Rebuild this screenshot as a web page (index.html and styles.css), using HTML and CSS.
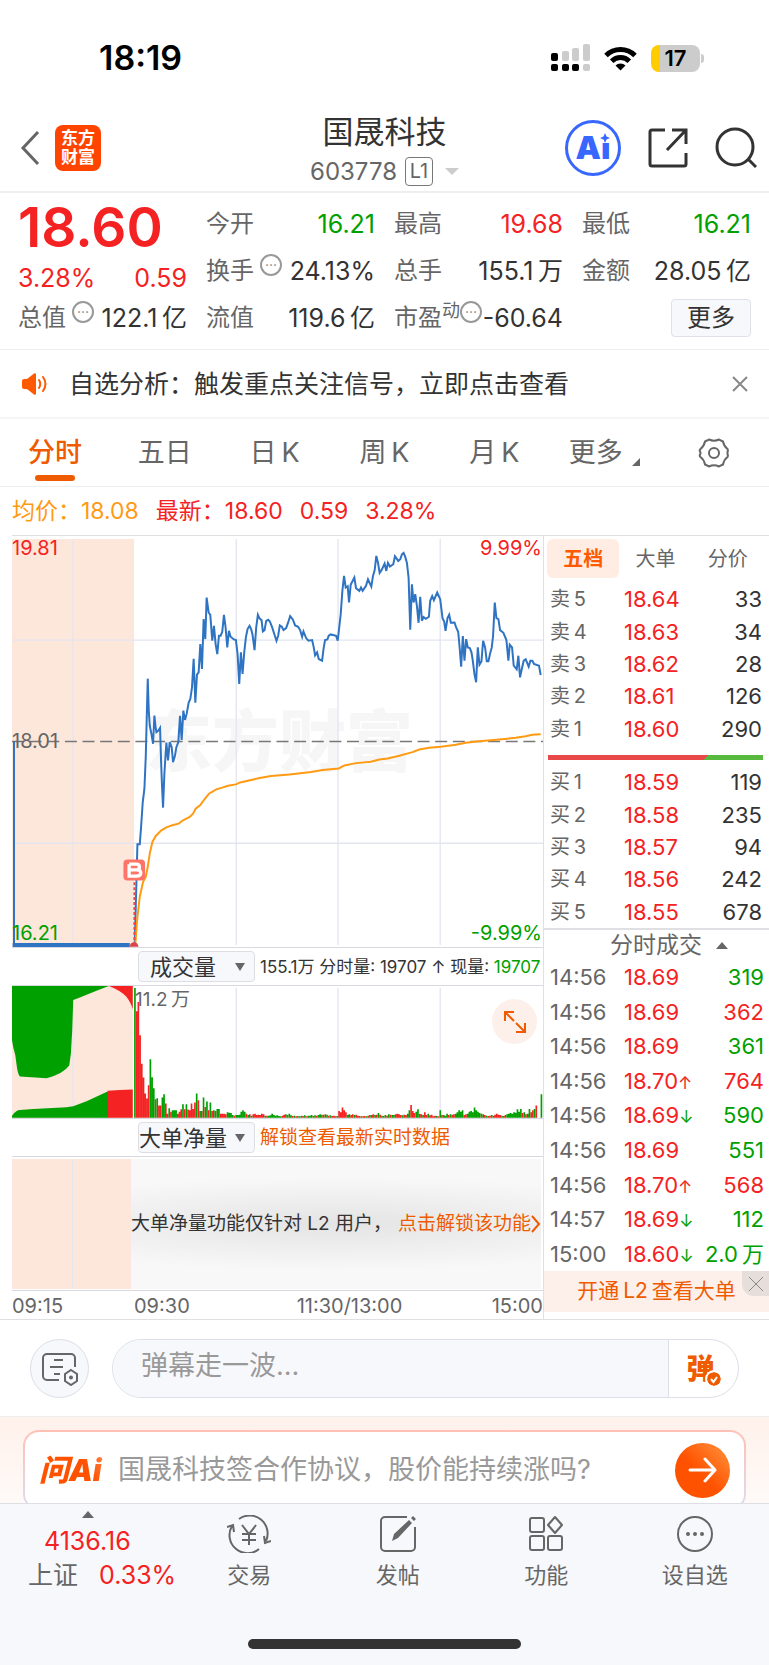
FILE: index.html
```html
<!DOCTYPE html>
<html lang="zh-CN">

<head>
  <meta charset="UTF-8"/>
  <meta name="viewport" content="width=device-width, initial-scale=1"/>
  <title>国晟科技 603778</title>

  <link rel="stylesheet" href="styles.css">
</head>

<body>
<div class="status">
  <span class="clock">18:19</span>
  <div class="status-icons">
    <svg width="39" height="28" viewBox="0 0 39 28">
      <g fill="#ccc">
        <rect x="11" y="7" width="7" height="10" rx="2"/>
        <rect x="21" y="4" width="7" height="13" rx="2"/>
        <rect x="32" y="0" width="7" height="17" rx="2"/>
        <rect x="32" y="20" width="7" height="7" rx="2"/>
      </g>
      <rect x="0" y="9" width="7" height="8" rx="2"/>
      <rect x="0" y="20" width="7" height="7" rx="2"/>
      <rect x="11" y="20" width="7" height="7" rx="2"/>
      <rect x="21" y="20" width="7" height="7" rx="2"/>
    </svg>
    <svg width="33" height="25" viewBox="0 0 33 25">
      <g fill="none" stroke="#000" stroke-width="5">
        <path d="M2 9.5a20.5 20.5 0 0 1 29 0"/>
        <path d="M7.7 15.2a12.5 12.5 0 0 1 17.600 0"/>
      </g>
      <path d="M16.500 24.500l-5-5a7.500 7.500 0 0 1 10 0z"/>
    </svg>
    <div class="battery"><span>17</span></div>
  </div>
</div>

<header class="header">
  <div class="header-left">
    <a href="#" class="back" aria-label="返回">
      <svg width="20" height="36" viewBox="0 0 20 36" fill="none" stroke="#666" stroke-width="3"><path d="M18 2L3 18l15 16"/></svg>
    </a>
    <div class="brand">东方<br>财富</div>
  </div>
  <div class="header-title">
    <h1>国晟科技</h1>
    <p>603778 <span class="level">L1</span><i class="caret"></i></p>
  </div>
  <div class="header-right">
    <a href="#" class="ai">Ai
      <svg width="10" height="10" viewBox="0 0 10 10"><path fill="#3867ff" d="M5 0l1.500 3.500L10 5 6.500 6.500 5 10 3.500 6.500 0 5l3.500-1.500z"/></svg>
    </a>
    <button type="button" aria-label="分享">
      <svg width="40" height="40" viewBox="0 0 40 40" fill="none" stroke="#333" stroke-width="3">
        <path d="M17 2H4a2 2 0 0 0-2 2v32a2 2 0 0 0 2 2h32a2 2 0 0 0 2-2V25"/>
        <path d="M24 2h14v14M38 2L19 22"/>
      </svg>
    </button>
    <button type="button" aria-label="搜索">
      <svg width="42" height="42" viewBox="0 0 42 42" fill="none" stroke="#333" stroke-width="3">
        <circle cx="20" cy="20" r="18"/><path d="M33 32l8 8"/>
      </svg>
    </button>
  </div>
</header>

<section class="quote">
  <div class="quote-main">
    <div class="price">18.60</div>
    <div class="change"><span>3.28%</span><span>0.59</span></div>
    <div class="cell"><span class="name">总值</span><i class="tip">···</i><span class="value">122.1&thinsp;亿</span></div>
  </div>
  <div class="quote-grid">
    <div class="cell"><span class="name">今开</span><span class="value down">16.21</span></div>
    <div class="cell"><span class="name">最高</span><span class="value up">19.68</span></div>
    <div class="cell"><span class="name">最低</span><span class="value down">16.21</span></div>
    <div class="cell"><span class="name">换手</span><i class="tip">···</i><span class="value">24.13%</span></div>
    <div class="cell"><span class="name">总手</span><span class="value">155.1&thinsp;万</span></div>
    <div class="cell"><span class="name">金额</span><span class="value">28.05&thinsp;亿</span></div>
    <div class="cell"><span class="name">流值</span><span class="value">119.6&thinsp;亿</span></div>
    <div class="cell"><span class="name">市盈<sup>动</sup></span><i class="tip flush">···</i><span class="value">-60.64</span></div>
    <div class="cell"><button type="button" class="more">更多</button></div>
  </div>
</section>

<section class="notice">
  <svg width="26" height="22" viewBox="0 0 26 22">
    <path fill="#ff5a00" d="M1 8q0-2 2-2h3l7-5.500q2-1 2 1v19q0 2-2 1L6 16H3q-2 0-2-2z"/>
    <path fill="none" stroke="#ff5a00" stroke-width="2" stroke-linecap="round" d="M18 7q2.500 4 0 8M22 4q5 7 0 14"/>
  </svg>
  <a href="#">自选分析：触发重点关注信号，立即点击查看</a>
  <button type="button" aria-label="关闭">
    <svg width="16" height="16" viewBox="0 0 16 16" stroke="#888" stroke-width="2"><path d="M1 1l14 14M15 1L1 15"/></svg>
  </button>
</section>

<nav class="periods">
  <button type="button" class="active">分时</button>
  <button type="button">五日</button>
  <button type="button">日&thinsp;K</button>
  <button type="button">周&thinsp;K</button>
  <button type="button">月&thinsp;K</button>
  <button type="button">更多<i class="corner"></i></button>
  <button type="button" aria-label="设置">
    <svg width="32" height="30" viewBox="0 0 32 30" fill="none" stroke="#666" stroke-width="2">
      <path d="M11 1.500q5 2.500 10 0l4 2q1 5 4.500 7.500.800 1.500 0 3v2q.800 1.500 0 3Q26 21.500 25 26.500l-4 2q-5-2.500-10 0l-4-2Q6 21.500 2.500 19q-1.500-1.500 0-3.500v-1q-1.500-2 0-3.500Q6 8.500 7 3.500z"/>
      <circle cx="16" cy="15" r="5"/>
    </svg>
  </button>
</nav>

<p class="legend"><span class="avg">均价：18.08</span><span>最新：18.60</span><span>0.59</span><span>3.28%</span></p>

<main class="board">
  <div class="charts">
    <div class="plot price-plot">
      <div class="watermark">东方财富</div>
      <svg viewBox="36 15 1596 1236" preserveAspectRatio="none">
        <rect x="36" y="24" width="367" height="1224" fill="#fde6da"/>
        <g stroke="#e4e6ef" stroke-width="4">
          <path d="M219 24V1245M710 24V1245M1016 24V1245M1323 24V1245M36 328H1632M36 939H1632"/>
        </g>
        <path d="M36 633H1632" stroke="#777" stroke-width="4" stroke-dasharray="36 17"/>
        <path d="M42 633V1240" stroke="#2f73c3" stroke-width="6"/>
        <path d="M38 1245H390" stroke="#2f73c3" stroke-width="12"/>
        <polyline fill="none" stroke="#2f73c3" stroke-width="6" points="405,1240 413,942 420,942 424,890 429,815 434,775 438,680 441,560 444,444 447,540 450,585 455,610 460,640 464,555 467,585 470,605 476,600 481,592 484,690 487,770 490,832 494,730 500,636 505,690 510,635 516,650 520,695 526,675 530,650 536,635 541,556 546,628 551,540 556,568 561,550 567,516 572,505 577,470 582,384 587,516 592,432 597,425 602,340 607,415 612,265 617,325 621,200 627,245 632,252 638,330 643,285 648,340 653,370 658,315 663,315 668,303 673,252 678,290 683,350 688,300 693,318 703,326 709,328 714,370 719,460 724,365 729,430 734,365 739,320 744,295 750,285 755,296 759,312 765,358 770,290 775,252 780,263 786,268 790,302 795,298 800,270 806,267 811,272 818,290 826,315 831,330 836,315 841,284 847,288 852,298 860,292 866,275 872,256 880,266 887,284 896,288 902,298 908,318 912,302 920,322 927,330 938,328 943,350 947,374 953,365 958,385 968,390 973,350 977,328 984,326 988,315 994,311 1010,315 1015,330 1020,285 1024,250 1029,180 1034,135 1039,170 1045,166 1049,215 1054,162 1065,140 1070,172 1080,180 1085,170 1090,180 1100,165 1106,145 1116,167 1121,135 1126,118 1131,75 1136,95 1141,126 1147,117 1156,98 1161,120 1166,96 1172,107 1182,100 1187,76 1197,90 1203,85 1208,70 1213,66 1218,78 1223,96 1228,140 1233,297 1238,160 1243,215 1248,190 1253,225 1258,276 1263,198 1268,270 1273,259 1280,264 1289,258 1293,210 1299,196 1304,208 1314,185 1323,205 1330,262 1335,272 1339,300 1345,262 1350,252 1355,276 1366,275 1371,290 1377,303 1381,345 1386,408 1391,316 1396,390 1401,325 1406,350 1412,352 1417,365 1421,390 1426,430 1431,455 1436,350 1441,402 1447,392 1452,330 1458,350 1463,392 1468,392 1473,368 1478,350 1482,315 1487,215 1492,262 1498,265 1503,298 1513,306 1522,328 1528,390 1532,342 1539,350 1544,405 1553,416 1558,375 1563,440 1569,412 1574,390 1580,386 1589,408 1594,390 1600,390 1605,400 1620,405 1625,433"/>
        <polyline fill="none" stroke="#ff9a13" stroke-width="6" points="407,1238 412,1170 420,1100 430,1055 438,1040 444,1010 450,970 458,935 468,917 485,900 500,891 520,884 537,880 550,870 570,860 580,850 588,835 602,824 615,806 628,790 650,777 670,771 685,766 709,762 722,756 745,751 780,743 815,737 870,732 935,725 970,719 1018,714 1035,705 1070,698 1115,694 1140,687 1165,684 1200,676 1240,665 1260,657 1290,652 1325,649 1370,643 1400,637 1440,632 1500,627 1550,622 1580,617 1600,613 1625,611"/>
        <path d="M404 1056V1236" stroke="#e5484d" stroke-width="6" stroke-dasharray="9 6"/>
        <path d="M390 1250a13 13 0 0 1 26 0z" fill="#d9444a"/>
        <rect x="371" y="988" width="65" height="63" rx="12" fill="#ff7468"/>
        <path fill="none" stroke="#fff" stroke-width="10" d="M388 1002H410Q419 1002 419 1011Q419 1019 410 1019H388M410 1019Q423 1019 423 1028Q423 1038 410 1038H388V1002"/>
      </svg>
      <span class="label top left up">19.81</span>
      <span class="label middle left">18.01</span>
      <span class="label bottom left down">16.21</span>
      <span class="label top right up">9.99%</span>
      <span class="label bottom right down">-9.99%</span>
    </div>

    <div class="indicator">
      <div class="picker">
        <select aria-label="指标一"><option>成交量</option><option>成交额</option></select>
        <i class="arrow"></i>
      </div>
      <span class="summary">155.1万 分时量: 19707 ↑ 现量: <b class="down">19707</b></span>
    </div>

    <div class="plot volume-plot">
      <svg viewBox="36 138 1596 394" preserveAspectRatio="none">
        <rect x="36" y="138" width="363" height="394" fill="#fde6da"/>
        <path d="M219 138V531" stroke="#e4e6ef" stroke-width="4"/>
        <path fill="#00a000" d="M36 138H327L290 152 240 172 220 180 217 270 213 340 208 375Q190 400 140 413L60 408Q54 404 50 375L46 345 40 322 36 300z"/>
        <path fill="#00a000" d="M36 531V525Q48 508 60 508L100 505 200 500 220 497 260 482 325 452V531z"/>
        <path fill="#f42222" d="M327 138H399V208Q395 190 380 170 360 150 327 138zM324 451Q360 448 399 447V531H324z"/>
        <path d="M710 144V531M1016 144V531M1323 144V531" stroke="#e4e6ef" stroke-width="4"/>
        <path id="bars-up" fill="#f42222"/>
        <path id="bars-down" fill="#00a000"/>
      </svg>
      <span class="label volume-max">11.2&thinsp;万</span>
      <button type="button" class="expand" aria-label="全屏">
        <svg width="24" height="24" viewBox="0 0 24 24" fill="none" stroke="#ee5b00" stroke-width="2">
          <path d="M2 11V2h9M2 2l9 9M22 13v9h-9M22 22l-9-9"/>
        </svg>
      </button>
    </div>

    <div class="indicator">
      <div class="picker">
        <select aria-label="指标二"><option>大单净量</option><option>资金流向</option></select>
        <i class="arrow"></i>
      </div>
      <a href="#" class="unlock">解锁查看最新实时数据</a>
    </div>

    <div class="locked">
      <div class="auction"></div>
      <p><span>大单净量功能仅针对&nbsp;L2&nbsp;用户，</span><a href="#">点击解锁该功能<svg width="10" height="18" viewBox="0 0 10 18" fill="none" stroke="#ee5b00" stroke-width="2"><path d="M1 1l7 8-7 8"/></svg></a></p>
    </div>

    <div class="axis"><span>09:15</span><span>09:30</span><span>11:30/13:00</span><span>15:00</span></div>
  </div>

  <aside class="side">
    <div class="side-tabs">
      <button type="button" class="active">五档</button>
      <button type="button">大单</button>
      <button type="button">分价</button>
    </div>
    <table class="orders">
      <tr><th>卖&thinsp;5</th><td class="up">18.64</td><td>33</td></tr>
      <tr><th>卖&thinsp;4</th><td class="up">18.63</td><td>34</td></tr>
      <tr><th>卖&thinsp;3</th><td class="up">18.62</td><td>28</td></tr>
      <tr><th>卖&thinsp;2</th><td class="up">18.61</td><td>126</td></tr>
      <tr><th>卖&thinsp;1</th><td class="up">18.60</td><td>290</td></tr>
    </table>
    <div class="ratio"></div>
    <table class="orders">
      <tr><th>买&thinsp;1</th><td class="up">18.59</td><td>119</td></tr>
      <tr><th>买&thinsp;2</th><td class="up">18.58</td><td>235</td></tr>
      <tr><th>买&thinsp;3</th><td class="up">18.57</td><td>94</td></tr>
      <tr><th>买&thinsp;4</th><td class="up">18.56</td><td>242</td></tr>
      <tr><th>买&thinsp;5</th><td class="up">18.55</td><td>678</td></tr>
    </table>
    <h2>分时成交<i class="triangle"></i></h2>
    <table class="orders ticks">
      <tr><th>14:56</th><td class="up">18.69</td><td class="down">319</td></tr>
      <tr><th>14:56</th><td class="up">18.69</td><td class="up">362</td></tr>
      <tr><th>14:56</th><td class="up">18.69</td><td class="down">361</td></tr>
      <tr><th>14:56</th><td class="up">18.70<i class="up">↑</i></td><td class="up">764</td></tr>
      <tr><th>14:56</th><td class="up">18.69<i class="down">↓</i></td><td class="down">590</td></tr>
      <tr><th>14:56</th><td class="up">18.69</td><td class="down">551</td></tr>
      <tr><th>14:56</th><td class="up">18.70<i class="up">↑</i></td><td class="up">568</td></tr>
      <tr><th>14:57</th><td class="up">18.69<i class="down">↓</i></td><td class="down">112</td></tr>
      <tr><th>15:00</th><td class="up">18.60<i class="down">↓</i></td><td class="down">2.0&thinsp;万</td></tr>
    </table>
    <div class="promo">
      <a href="#">开通&thinsp;L2&thinsp;查看大单</a>
      <button type="button" aria-label="关闭">
        <svg width="14" height="14" viewBox="0 0 14 14" stroke="#888" stroke-width="1"><path d="M0 0l14 14M14 0L0 14"/></svg>
      </button>
    </div>
  </aside>
</main>

<form class="danmu">
  <button type="button" class="danmu-settings" aria-label="弹幕设置">
    <svg width="38" height="34" viewBox="0 0 38 34" fill="none" stroke="#666" stroke-width="2">
      <path d="M18 28H6a4 4 0 0 1-4-4V6a4 4 0 0 1 4-4h24a4 4 0 0 1 4 4v9"/>
      <path d="M13 8h9M9 15h13M13 22h6"/>
      <path d="M30 18l6 4v7l-6 4-6-4v-7z"/><circle cx="30" cy="25.500" r="1"/>
    </svg>
  </button>
  <div class="danmu-box">
    <input type="text" aria-label="弹幕" placeholder="弹幕走一波...">
    <button type="button" class="danmu-toggle">弹
      <svg width="14" height="14" viewBox="0 0 14 14"><circle cx="7" cy="7" r="7" fill="#ee5b00"/><path d="M4 7l2.500 3L10 5" fill="none" stroke="#fff" stroke-width="2"/></svg>
    </button>
  </div>
</form>

<section class="ask">
  <div class="ask-card">
    <span class="ask-logo">问Ai</span>
    <a href="#">国晟科技签合作协议，股价能持续涨吗?</a>
    <button type="button" aria-label="提问">
      <svg width="30" height="26" viewBox="0 0 30 26" fill="none" stroke="#fff" stroke-width="3" stroke-linecap="round" stroke-linejoin="round"><path d="M2 13h25M17 2l10 11-10 11"/></svg>
    </button>
  </div>
</section>

<footer class="tabbar">
  <div class="tabs">
    <a href="#" class="index">
      <i class="triangle"></i>
      <span class="up">4136.16</span>
      <span class="index-row">上证 <b class="up">0.33%</b></span>
    </a>
    <a href="#">
      <svg width="44" height="38" viewBox="0 0 44 38" fill="none" stroke="#666" stroke-width="2">
        <path d="M12 4a18 18 0 0 1 27 22M32 34A18 18 0 0 1 5 11M0 12l6-2 1 7M44 26l-6 2-1-7"/>
        <path d="M15 10l7 9 7-9M22 19v11M15 19h14M15 25h14"/>
      </svg>
      交易
    </a>
    <a href="#">
      <svg width="38" height="38" viewBox="0 0 38 38" fill="none" stroke="#666" stroke-width="2">
        <path d="M28 2H6a4 4 0 0 0-4 4v26a4 4 0 0 0 4 4h26a4 4 0 0 0 4-4V12"/>
        <path fill="#666" stroke="none" d="M13 26l2-7L30 5l3 3-14 15zM32 3l2-2 3 3-2 2z"/>
      </svg>
      发帖
    </a>
    <a href="#">
      <svg width="36" height="36" viewBox="0 0 36 36" fill="none" stroke="#666" stroke-width="2">
        <rect x="2" y="2" width="14" height="14" rx="2"/><rect x="2" y="20" width="14" height="14" rx="2"/><rect x="20" y="20" width="14" height="14" rx="2"/>
        <path d="M27 1l7 8-7 8-7-8z" stroke-linejoin="round"/>
      </svg>
      功能
    </a>
    <a href="#">
      <svg width="38" height="38" viewBox="0 0 38 38" fill="none" stroke="#666" stroke-width="2">
        <circle cx="19" cy="19" r="17"/>
        <g fill="#666" stroke="none"><circle cx="12" cy="19" r="2"/><circle cx="19" cy="19" r="2"/><circle cx="26" cy="19" r="2"/></g>
      </svg>
      设自选
    </a>
  </div>
  <div class="home"></div>
</footer>

<script src="script.js"></script>
</body>

</html>
```

FILE: styles.css
```css
* {
    box-sizing: border-box;
}

body {
    margin: 0;
    font-family: Inter, "Noto Sans CJK SC", sans-serif;
    font-size: 24px;
    line-height: 32px;
    color: #333;
    background-color: #fff;
}

h1,
h2,
p {
    margin: 0;
    font-weight: normal;
}

a {
    color: inherit;
    text-decoration: none;
}

i,
b {
    font-style: normal;
    font-weight: normal;
}

button {
    display: flex;
    align-items: center;
    justify-content: center;
    padding: 0;
    border: 0;
    background: none;
    font: inherit;
    color: inherit;
}

svg {
    display: block;
    flex: none;
}

.up {
    color: #f42222;
}

.down {
    color: #00a000;
}

.triangle {
    width: 0;
    height: 0;
    border: 6px solid transparent;
    border-top: 0;
    border-bottom: 7px solid #666;
}

/* status bar */
.status {
    display: flex;
    align-items: center;
    justify-content: space-between;
    height: 110px;
    padding: 6px 69px 0 99px;
}

.clock {
    font-size: 34px;
    font-weight: 600;
    color: #000;
}

.status-icons {
    display: flex;
    align-items: center;
    gap: 14px;
}

.battery {
    position: relative;
    width: 49px;
    height: 27px;
    border-radius: 8px;
    background: linear-gradient(90deg, #ffcc00 9px, #ccc 9px);
    font-size: 22px;
    font-weight: 600;
    line-height: 27px;
    text-align: center;
    color: #000;
}

.battery::after {
    content: "";
    position: absolute;
    top: 9px;
    right: -4px;
    width: 3px;
    height: 9px;
    border-radius: 0 3px 3px 0;
    background-color: #ccc;
}

/* header */
.header {
    display: grid;
    grid-template-columns: 1fr auto 1fr;
    align-items: center;
    height: 83px;
    padding: 0 12px;
    border-bottom: 2px solid #eee;
}

.header-left {
    display: flex;
    align-items: center;
    gap: 15px;
    padding: 0 0 6px 8px;
}

.brand {
    width: 46px;
    height: 46px;
    padding-top: 4px;
    border-radius: 8px;
    background-color: #ff4400;
    font-size: 17px;
    font-weight: bold;
    line-height: 19px;
    text-align: center;
    color: #fff;
}

.header-title {
    text-align: center;
}

.header-title h1 {
    margin-bottom: 2px;
    font-size: 31px;
    line-height: 40px;
}

.header-title p {
    display: flex;
    align-items: center;
    justify-content: center;
    gap: 8px;
    height: 36px;
    color: #666;
}

.level {
    width: 28px;
    border: 1px solid #777;
    border-radius: 4px;
    font-size: 20px;
    line-height: 27px;
}

.caret {
    margin-left: 4px;
    border: 7px solid transparent;
    border-top-color: #ccc;
    border-bottom: 0;
}

.header-right {
    display: flex;
    align-items: center;
    justify-content: flex-end;
    gap: 27px;
    padding-bottom: 6px;
}

.ai {
    position: relative;
    width: 56px;
    height: 56px;
    border: 3px solid #3867ff;
    border-radius: 50%;
    font-size: 32px;
    font-weight: 900;
    line-height: 50px;
    text-align: center;
    color: #3867ff;
}

.ai svg {
    position: absolute;
    top: 10px;
    right: 8px;
    background-color: #fff;
}

/* quote */
.quote {
    display: grid;
    grid-template-columns: repeat(4, minmax(0, 1fr));
    column-gap: 19px;
    padding: 7px 18px 8px;
    border-bottom: 1px solid #eee;
}

.quote-grid {
    display: grid;
    grid-column: 2 / 5;
    grid-template-columns: repeat(3, minmax(0, 1fr));
    column-gap: 19px;
}

.price {
    height: 52px;
    font-size: 55px;
    font-weight: 600;
    line-height: 54px;
    color: #f42222;
}

.change {
    display: flex;
    align-items: flex-end;
    justify-content: space-between;
    height: 42px;
    font-size: 25px;
    color: #f42222;
}

.cell {
    display: flex;
    align-items: center;
    height: 47px;
    font-size: 24px;
    white-space: nowrap;
}

.name {
    color: #666;
}

.name sup {
    font-size: 18px;
    line-height: 0;
}

.tip {
    flex: none;
    align-self: flex-start;
    width: 22px;
    height: 22px;
    margin: 7px 0 0 6px;
    border: 2px solid #999;
    border-radius: 50%;
    font-size: 14px;
    line-height: 17px;
    text-align: center;
    color: #888;
}

.tip.flush {
    margin-left: 0;
}

.value {
    margin-left: auto;
    font-size: 25px;
}

.more {
    width: 80px;
    height: 38px;
    margin-left: auto;
    border: 1px solid #dfe1ea;
    border-radius: 4px;
    background-color: #f7f8fb;
}

/* notice */
.notice {
    display: flex;
    align-items: center;
    height: 69px;
    padding: 0 21px;
    border-bottom: 2px solid #f5f5f5;
    font-size: 25px;
}

.notice a {
    flex: 1;
    margin-left: 22px;
}

/* period tabs */
.periods {
    display: grid;
    grid-template-columns: repeat(7, 1fr);
    height: 68px;
    border-bottom: 1px solid #eee;
    font-size: 27px;
    color: #666;
}

.periods .active {
    position: relative;
    color: #ee5b00;
    font-weight: 500;
}

.periods .active::after {
    content: "";
    position: absolute;
    bottom: 5px;
    width: 40px;
    height: 6px;
    border-radius: 3px;
    background-color: #ee5b00;
}

.corner {
    margin: 18px 0 0 9px;
    border: 4px solid #666;
    border-top-color: transparent;
    border-left-color: transparent;
}

.legend {
    display: flex;
    gap: 17px;
    height: 48px;
    padding-left: 12px;
    font-size: 23px;
    line-height: 48px;
    color: #f42222;
}

.legend .avg {
    color: #ff9a13;
}

/* charts + order book */
.board {
    display: grid;
    grid-template-columns: minmax(0, 1fr) 225px;
    padding-left: 12px;
    border-bottom: 1px solid #e0e0e4;
}

.charts {
    border: 1px solid #e0e0e4;
    border-width: 1px 1px 0 0;
}

.plot {
    position: relative;
}

.plot svg {
    width: 100%;
}

.price-plot > svg {
    position: relative;
    height: 411px;
}

.watermark {
    position: absolute;
    top: 161px;
    left: 133px;
    font-size: 67px;
    font-weight: 900;
    line-height: 90px;
    color: #f6f6f6;
}

.label {
    position: absolute;
    font-size: 20px;
    line-height: 24px;
}

.left {
    left: 0;
}

.right {
    right: 1px;
}

.top {
    top: 0;
}

.middle {
    top: 193px;
    color: #666;
}

.bottom {
    bottom: 2px;
}

.indicator {
    display: flex;
    align-items: center;
    gap: 5px;
    height: 39px;
    padding-left: 126px;
    border: 1px solid #d8d8de;
    border-width: 1px 0;
    white-space: nowrap;
}

.picker {
    position: relative;
}

.picker select {
    display: block;
    width: 117px;
    height: 31px;
    padding: 0 27px 0 0;
    border: 1px solid #dcdee4;
    border-radius: 4px;
    background-color: #f7f8fb;
    appearance: none;
    font: inherit;
    font-size: 22px;
    line-height: 28px;
    text-align-last: center;
    color: #333;
}

.arrow {
    position: absolute;
    top: 12px;
    right: 10px;
    border: 5px solid transparent;
    border-top: 8px solid #666;
    border-bottom: 0;
}

.summary {
    font-size: 17px;
}

.unlock {
    font-size: 19px;
    color: #ee5b00;
}

.volume-plot > svg {
    height: 132px;
}

.volume-max {
    top: 2px;
    left: 123px;
    font-size: 19px;
    color: #666;
}

.expand {
    position: absolute;
    top: 13px;
    right: 6px;
    width: 45px;
    height: 45px;
    border-radius: 50%;
    background-color: #fdf0ea;
}

.plot .expand svg {
    width: 24px;
}

.locked {
    display: grid;
    grid-template-columns: 119px 1fr;
    height: 134px;
    padding: 2px 2px 2px 0;
    border-bottom: 1px solid #d8d8de;
    font-size: 19px;
    line-height: 130px;
    white-space: nowrap;
}

.auction {
    background: linear-gradient(90deg, #fde6da 60px, #e4e6ef 60px, #e4e6ef 61px, #fde6da 61px);
}

.locked p {
    display: flex;
    justify-content: space-between;
    background: radial-gradient(ellipse 90% 36% at 50% 50%, #e4e4e4, #f8f8f8);
}

.locked a {
    display: flex;
    align-items: center;
    color: #ee5b00;
}

.axis {
    display: grid;
    grid-template-columns: 122px 1fr 1fr 1fr;
    height: 28px;
    font-size: 20px;
    line-height: 30px;
    white-space: nowrap;
    color: #666;
}

.axis span:nth-child(3) {
    padding-left: 22px;
    text-align: center;
}

.axis span:last-child {
    text-align: right;
}

.side {
    border-top: 1px solid #e0e0e4;
}

.side-tabs {
    display: grid;
    grid-template-columns: repeat(3, 1fr);
    height: 39px;
    margin: 3px 5px 5px 3px;
    font-size: 20px;
    color: #666;
}

.side-tabs .active {
    border-radius: 6px;
    background-color: #ffede4;
    font-weight: bold;
    color: #ff5a00;
}

.orders {
    width: 100%;
    height: 162px;
    padding: 0 7px 0 6px;
    border-spacing: 0;
    table-layout: fixed;
    font-size: 22px;
    line-height: 28px;
}

.orders th,
.orders td {
    padding: 0;
    font-weight: normal;
    text-align: left;
    white-space: nowrap;
}

.orders th {
    width: 74px;
    font-size: 20px;
    color: #666;
}

.orders td:last-child {
    width: 62px;
    text-align: right;
}

.orders i {
    font-size: 17px;
    line-height: 20px;
}

.orders.ticks {
    height: 311px;
    padding-right: 5px;
}

.orders.ticks th {
    font-size: 22px;
}

.ratio {
    height: 5px;
    margin: 10px 6px 6px 4px;
    background: linear-gradient(135deg, #e94848 73%, #58b93f 73%);
}

.side h2 {
    display: flex;
    align-items: center;
    justify-content: center;
    gap: 14px;
    height: 32px;
    padding-left: 25px;
    border-top: 2px solid #e0e0e4;
    font-size: 23px;
    line-height: 30px;
    color: #666;
}

.promo {
    position: relative;
    height: 41px;
    font-size: 21px;
    line-height: 39px;
    text-align: center;
    background-color: #fdf0ea;
    color: #ee5b00;
}

.promo button {
    position: absolute;
    top: 0;
    right: 0;
    width: 27px;
    height: 25px;
    border-bottom-left-radius: 12px;
    background-color: #e6dedb;
}

/* comment bar */
.danmu {
    display: flex;
    gap: 23px;
    padding: 19px 30px 18px;
    border-bottom: 1px solid #eee;
}

.danmu-settings {
    width: 59px;
    height: 59px;
    border: 1px solid #dcdee8;
    border-radius: 50%;
    background-color: #f7f8fb;
}

.danmu-box {
    display: flex;
    flex: 1;
    height: 59px;
    border: 1px solid #dcdee8;
    border-radius: 30px;
    overflow: hidden;
}

.danmu-box input {
    flex: 1;
    min-width: 0;
    padding: 0 28px 5px;
    border: 0;
    background-color: #f7f8fb;
    font: inherit;
    font-size: 27px;
}

.danmu-box input::placeholder {
    color: #999;
}

.danmu-toggle {
    position: relative;
    width: 70px;
    padding-right: 6px;
    border-left: 1px solid #dcdee8;
    font-size: 28px;
    font-weight: 900;
    color: #ee5b00;
}

.danmu-toggle svg {
    position: absolute;
    right: 17px;
    bottom: 11px;
    border-radius: 50%;
    outline: 2px solid #fff;
}

/* ask AI */
.ask {
    height: 86px;
    padding: 13px 23px 0;
    overflow: hidden;
    background: linear-gradient(#fff1eb, #fffaf8);
}

.ask-card {
    display: flex;
    align-items: center;
    height: 80px;
    padding: 0 14px;
    border: 2px solid transparent;
    border-radius: 16px;
    background: linear-gradient(#fff, #fff) padding-box, linear-gradient(#ffc0b4, #dedcf0) border-box;
    font-size: 27px;
    color: #999;
}

.ask-logo {
    width: 79px;
    font-size: 30px;
    font-style: italic;
    font-weight: 900;
    background: linear-gradient(60deg, #ff5200 60%, #ffa070);
    background-clip: text;
    color: transparent;
}

.ask-card a {
    flex: 1;
    white-space: nowrap;
}

.ask-card button {
    width: 55px;
    height: 55px;
    border-radius: 50%;
    background: linear-gradient(45deg, #ff5200 45%, #ff9640);
}

/* bottom bar */
.tabbar {
    height: 163px;
    border-top: 1px solid #dddfe4;
    background-color: #f7f8fb;
}

.tabs {
    display: grid;
    grid-template-columns: 175px repeat(4, 1fr);
    height: 135px;
    font-size: 22px;
    color: #666;
}

.tabs a {
    display: flex;
    flex-direction: column;
    align-items: center;
    padding-top: 11px;
}

.tabs a svg {
    height: 38px;
    margin-bottom: 6px;
}

.tabs .index {
    padding: 7px 0 0 28px;
    align-items: flex-start;
    font-size: 25px;
}

.index .triangle {
    margin: 0 0 7px 54px;
}

.index .up {
    margin-left: 16px;
}

.index-row {
    margin-top: 2px;
    white-space: nowrap;
}

.index-row .up {
    margin-left: 14px;
}

.home {
    width: 273px;
    height: 10px;
    margin: 0 auto;
    border-radius: 5px;
    background-color: #333;
}
```

FILE: script.js
```javascript
// minute volumes, negative = falling minute
var volumes = [
  -387, 318, 345, 246, 161, 120, 72, 57, 97, -174, -121, -88, 55, -58, 36, 36, -60, -70, 42, 12,
  -28, 18, -22, -22, -22, 12, 18, 25, -40, 25, -40, 24, 22, 42, 26, 45, -72, 52, -20, 20,
  -60, 32, -48, 22, -45, 20, -22, 20, -26, -26, 12, 12, 12, 10, -16, -15, -14, -8, 6, -8,
  -8, -9, -18, -22, -18, 12, -8, 10, -6, 10, 12, 8, 9, 8, 12, 10, -6, 6, -6, -7,
  -12, -8, -6, -7, -5, -4, 6, 9, -10, 8, -12, -7, 5, -6, 4, -5, 4, -6, 5, -7,
  4, -6, -6, -8, 5, -7, 6, -8, -10, 9, -9, 10, -9, 6, -7, 5, 6, 4, -5, 20,
  16, 30, 22, 16, -8, -10, 8, 10, -8, 9, 6, 5, -4, 4, 5, -4, 6, -8, 8, 10,
  -8, 9, -14, 9, -6, 5, -8, 6, -10, 9, -8, -8, 10, 12, 10, 8, -7, 9, 8, -12,
  -22, 38, 20, 14, -18, -25, 12, 10, -8, 16, 8, -12, 7, 9, 4, 6, -5, 4, -22, 8,
  -8, -6, -12, 8, -10, 9, 10, -12, -16, -22, -18, -22, 8, 10, -12, -18, -20, -16, -30, -22,
  -18, -14, 12, -10, 8, -6, 5, 6, -8, 6, 9, 12, 9, 8, -6, 5, 8, -10, -12, -14,
  -12, -16, -15, -25, -18, -26, 14, -16, 10, -12, -26, 16, 22, -26, 36, 0, 0, -70
];

var step = (1630 - 403) / volumes.length;
var up = '';
var down = '';

volumes.forEach(function (v, i) {
  var x = (403 + i * step).toFixed(1);
  var h = Math.abs(v);
  var bar = 'M' + x + ' 531v-' + h + 'h5v' + h + 'z';
  if (v < 0) {
    down += bar;
  } else {
    up += bar;
  }
});

document.getElementById('bars-up').setAttribute('d', up);
document.getElementById('bars-down').setAttribute('d', down);
```
